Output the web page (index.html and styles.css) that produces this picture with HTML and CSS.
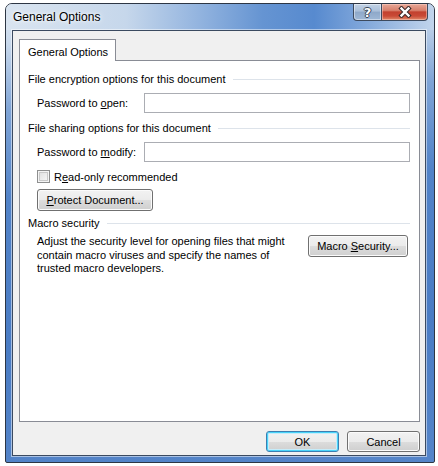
FILE: index.html
```html
<!DOCTYPE html>
<html>
<head>
<meta charset="utf-8">
<link rel="stylesheet" href="styles.css">
</head>
<body>
<div class="window">
  <div class="titlebar">
    <span class="title">General Options</span>
    <div class="caption-buttons">
      <div class="cap cap-help"><span class="qmark">?</span></div>
      <div class="cap cap-close">
        <svg width="16" height="12" viewBox="0 0 16 12"><path d="M4.5 2.5 L11.5 9.5 M11.5 2.5 L4.5 9.5" stroke="#3a2a2a" stroke-width="4.4" stroke-linecap="square"/><path d="M4.5 2.5 L11.5 9.5 M11.5 2.5 L4.5 9.5" stroke="#ffffff" stroke-width="2.4" stroke-linecap="square"/></svg>
      </div>
    </div>
  </div>
  <div class="client">
    <div class="tabs"><div class="tab">General Options</div></div>
    <div class="panel">
      <div class="group-head"><span>File encryption options for this document</span><i></i></div>
      <div class="field-row"><span class="label">Password to <u>o</u>pen:</span><div class="input"></div></div>
      <div class="group-head head2"><span>File sharing options for this document</span><i></i></div>
      <div class="field-row"><span class="label">Password to <u>m</u>odify:</span><div class="input"></div></div>
      <div class="check-row"><span class="checkbox"></span><span>R<u>e</u>ad-only recommended</span></div>
      <div class="btn btn-protect"><span><u>P</u>rotect Document...</span></div>
      <div class="group-head head3"><span>Macro security</span><i></i></div>
      <div class="macro-row">
        <p class="macro-text">Adjust the security level for opening files that might<br>contain macro viruses and specify the names of<br>trusted macro developers.</p>
        <div class="btn btn-macro"><span>Macro <u>S</u>ecurity...</span></div>
      </div>
    </div>
    <div class="footer">
      <div class="btn btn-ok"><span>OK</span></div>
      <div class="btn btn-cancel"><span>Cancel</span></div>
    </div>
  </div>
</div>
</body>
</html>
```
FILE: styles.css
```css
* { box-sizing: border-box; }
html, body { margin: 0; padding: 0; background: #ffffff; }
body {
  font-family: "Liberation Sans", Arial, sans-serif;
  font-size: 11px;
  color: #000;
  width: 438px;
  height: 466px;
  overflow: hidden;
  white-space: nowrap;
}
.window {
  margin: 3px 0 0 5px;
  width: 430px;
  height: 460px;
  border: 1px solid #2d3644;
  border-radius: 7px 7px 2px 2px;
  background:
    linear-gradient(176deg, #dde7f2 0%, #c9d9ec 8%, #7fa4d6 22%, #5283c8 40%, #4a7cc4 70%, #5585c9 100%);
  display: flex;
  flex-direction: column;
  overflow: hidden;
}
.titlebar {
  height: 26px;
  flex: none;
  display: flex;
  justify-content: space-between;
  align-items: flex-start;
  background: linear-gradient(to right, #d9e4f0 0%, #c6d7eb 28%, #93b4df 45%, #6594d2 60%, #578acf 72%, #82a8db 84%, #c2d5ec 100%);
}
.title {
  padding: 6px 0 0 7px;
  line-height: 15px;
  font-size: 12px;
  color: #000;
  text-shadow: 0 0 6px #ffffff, 0 0 3px #ffffff;
}
.caption-buttons {
  display: flex;
  margin-right: 6px;
}
.cap {
  height: 17px;
  border: 1px solid #3d4a5e;
  border-top: none;
  display: flex;
  align-items: center;
  justify-content: center;
}
.cap-help {
  width: 28px;
  border-radius: 0 0 0 4px;
  border-right: none;
  background: linear-gradient(#c3d3e6 0%, #aabfd9 45%, #8ea8c9 50%, #9fb8d6 100%);
  box-shadow: inset 0 0 0 1px rgba(255,255,255,0.45);
}
.qmark {
  font-family: "DejaVu Sans", sans-serif;
  font-weight: bold;
  font-size: 13px;
  color: #fff;
  line-height: 13px;
  text-shadow: -1px 0 #3a4556, 1px 0 #3a4556, 0 -1px #3a4556, 0 1px #3a4556;
}
.cap-close {
  width: 47px;
  border-radius: 0 0 4px 0;
  background: linear-gradient(#e8a897 0%, #d8806c 40%, #c2412f 50%, #c94a36 75%, #e08a6a 100%);
  box-shadow: inset 0 0 0 1px rgba(255,220,210,0.45);
}
.cap-close svg { display: block; }
.client {
  flex: 1;
  margin: 0 8px 6px 6px;
  background: #f0f0f0;
  border: 1px solid #3b4a60;
  box-shadow: 0 0 0 1px rgba(255,255,255,0.5);
  padding: 8px 5px 3px 6px;
  display: flex;
  flex-direction: column;
}
.tabs { display: flex; height: 21px; flex: none; }
.tab {
  width: 97px;
  height: 22px;
  background: #fff;
  border: 1px solid #898c95;
  border-bottom: none;
  padding: 5px 0 0 8px;
  line-height: 14px;
  position: relative;
  z-index: 1;
}
.panel {
  flex: 1;
  background: #fff;
  border: 1px solid #898c95;
  padding: 11px 9px 0 8px;
}
.group-head {
  display: flex;
  align-items: center;
  height: 15px;
  line-height: 15px;
}
.group-head i {
  flex: 1;
  height: 1px;
  background: #dde3ea;
  margin-left: 7px;
}
.head2 { margin-top: 8px; }
.head3 { margin-top: 5px; }
.field-row {
  display: flex;
  align-items: center;
  margin-top: 6px;
  padding-left: 9px;
}
.label { width: 107px; }
.input {
  flex: 1;
  height: 20px;
  border: 1px solid #abadb3;
  background: #fff;
}
.check-row {
  display: flex;
  align-items: center;
  height: 15px;
  margin-top: 7px;
  padding-left: 9px;
}
.checkbox {
  width: 13px;
  height: 13px;
  border: 1px solid #8e8f8f;
  background: linear-gradient(135deg, #dcdcdc, #fbfbfb);
  box-shadow: inset 0 0 0 1px #f4f4f4, inset 0 0 0 2px #c9c9c9;
  margin-right: 4px;
}
.btn {
  height: 22px;
  border: 1px solid #707070;
  border-radius: 3px;
  background: linear-gradient(#f2f2f2 0%, #ebebeb 50%, #dddddd 51%, #cfcfcf 100%);
  box-shadow: inset 0 0 0 1px #fbfbfb;
  display: flex;
  align-items: center;
  justify-content: center;
  line-height: 14px;
}
.btn-protect {
  width: 116px;
  margin: 5px 0 0 9px;
}
.macro-row {
  display: flex;
  justify-content: space-between;
  align-items: flex-start;
  margin-top: 4px;
  padding-left: 9px;
}
.macro-text {
  margin: 0;
  line-height: 13.5px;
}
.btn-macro {
  width: 100px;
  margin-right: 2px;
}
.footer {
  display: flex;
  justify-content: flex-end;
  gap: 8px;
  margin-top: 9px;
  flex: none;
}
.btn-ok, .btn-cancel { width: 73px; height: 21px; }
.btn-ok {
  border-color: #3c7fb1;
  box-shadow: inset 0 0 0 1px #48d3f9, inset 0 0 0 2px #c6ecfa;
}
```
